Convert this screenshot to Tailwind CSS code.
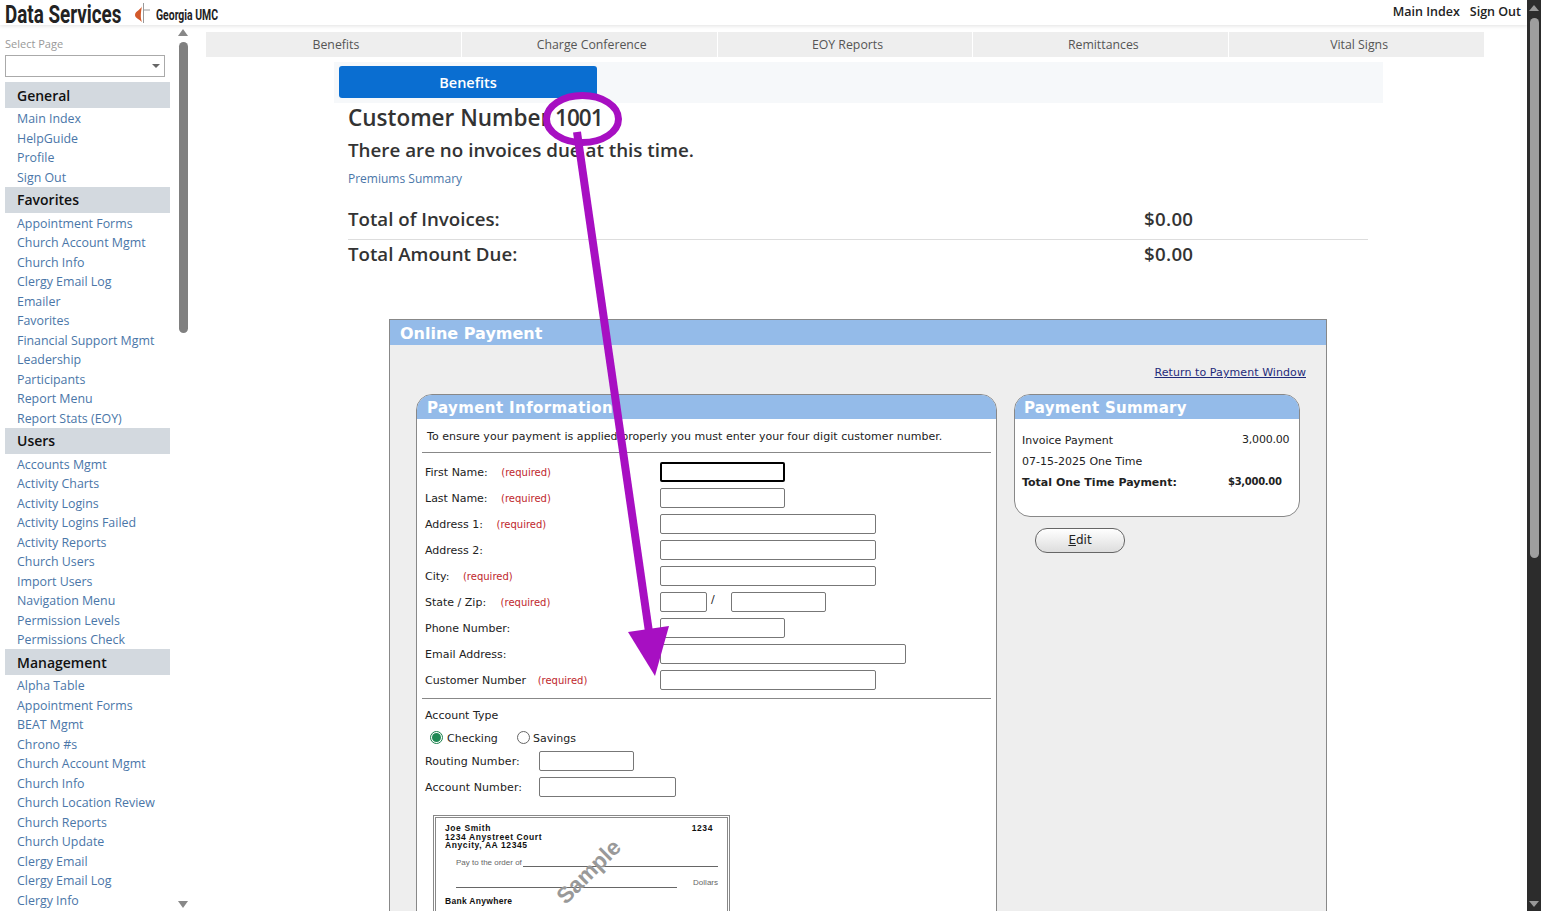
<!DOCTYPE html>
<html lang="en">
<head>
  <meta charset="UTF-8">
  <title>Data Services - Benefits</title>
  <script src="https://cdn.jsdelivr.net/npm/@tailwindcss/browser@4"></script>
</head>
<body class="bg-white font-['Open_Sans',sans-serif] overflow-hidden">
<div class="relative flex h-[911px] w-[1541px] overflow-hidden">

  <div class="w-[1527px] h-[911px] overflow-hidden">
    <!-- Top bar -->
    <header class="h-[25px] flex items-center shadow-[0_1px_4px_rgba(0,0,0,0.12)] relative">
      <div class="w-[180px] -mr-[50px] pl-[5px] h-[25px] pt-[1px]">
        <div class="origin-left scale-x-[.71] w-[172px] font-['Roboto',sans-serif] font-bold text-[26.5px] leading-[25px] text-[#222] whitespace-nowrap">Data Services</div>
      </div>
      <svg class="ml-[4px] w-[16px] h-[20px]" viewBox="0 0 16 20">
        <path d="M8 3 C8 6 1 8 1 12 C1 15 5 16 8 19 C6 15 7 8 8 3Z" fill="#d2592a"/>
        <path d="M9.5 0 V20 M9.5 7 H16" stroke="#999" stroke-width="1" fill="none"/>
      </svg>
      <div class="ml-[6px] pt-[5px] origin-left scale-x-[.745] font-['Roboto',sans-serif] font-bold text-[14px] leading-[20px] text-[#222] whitespace-nowrap">Georgia UMC</div>
      <nav class="ml-auto pr-[6px] flex gap-[10px] text-[12.5px] font-semibold text-[#222]">
        <a>Main Index</a><a>Sign Out</a>
      </nav>
    </header>

    <div class="flex">
      <!-- Sidebar -->
      <aside class="w-[173px] shrink-0 pl-[5px] h-[886px] overflow-hidden">
        <div class="pt-[12px] h-[30px] text-[11px] leading-[14px] text-[#999]">Select Page</div>
        <div class="w-[160px] h-[22px] border border-[#aaa] flex items-center justify-end pr-[4px]">
          <div class="w-0 h-0 border-x-[4px] border-x-transparent border-t-[4px] border-t-[#666]"></div>
        </div>
        <div class="mt-[5px] w-[165px] text-[12.4px] leading-[19.5px] text-[#4a76a8]">
          <h3 class="h-[26px] pl-[12px] bg-[#d3d9df] text-[14px] font-semibold leading-[28px] text-[#111]">General</h3>
          <ul class="pl-[12px] pt-[.5px]">
            <li class="pt-[.5px] -mb-[.5px]">Main Index</li><li class="pt-[.5px] -mb-[.5px]">HelpGuide</li><li class="pt-[.5px] -mb-[.5px]">Profile</li><li class="pt-[.5px] -mb-[.5px]">Sign Out</li>
          </ul>
          <h3 class="h-[26px] pl-[12px] bg-[#d3d9df] text-[14px] font-semibold leading-[26px] text-[#111]">Favorites</h3>
          <ul class="pl-[12px] pt-[1px] -mb-[.5px]">
            <li>Appointment Forms</li><li>Church Account Mgmt</li><li>Church Info</li><li>Clergy Email Log</li><li>Emailer</li><li>Favorites</li><li>Financial Support Mgmt</li><li>Leadership</li><li>Participants</li><li>Report Menu</li><li>Report Stats (EOY)</li>
          </ul>
          <h3 class="h-[26px] pl-[12px] bg-[#d3d9df] text-[14px] font-semibold leading-[26px] text-[#111]">Users</h3>
          <ul class="pl-[12px] pt-[1px] -mb-[.5px]">
            <li>Accounts Mgmt</li><li>Activity Charts</li><li>Activity Logins</li><li>Activity Logins Failed</li><li>Activity Reports</li><li>Church Users</li><li>Import Users</li><li>Navigation Menu</li><li>Permission Levels</li><li>Permissions Check</li>
          </ul>
          <h3 class="h-[26px] pl-[12px] bg-[#d3d9df] text-[14px] font-semibold leading-[28px] text-[#111]">Management</h3>
          <ul class="pl-[12px] pt-[1px]">
            <li>Alpha Table</li><li>Appointment Forms</li><li>BEAT Mgmt</li><li>Chrono #s</li><li>Church Account Mgmt</li><li>Church Info</li><li>Church Location Review</li><li>Church Reports</li><li>Church Update</li><li>Clergy Email</li><li>Clergy Email Log</li><li>Clergy Info</li>
          </ul>
        </div>
      </aside>

      <!-- Sidebar scrollbar -->
      <div class="w-[10px] ml-[5px] shrink-0 h-[886px] flex flex-col items-center">
        <div class="mt-[4px] w-0 h-0 border-x-[5px] border-x-transparent border-b-[7px] border-b-[#888]"></div>
        <div class="mt-[6px] w-[9px] h-[291px] rounded-full bg-[#808080]"></div>
        <div class="mt-auto mb-[3px] w-0 h-0 border-x-[5px] border-x-transparent border-t-[7px] border-t-[#888]"></div>
      </div>

      <!-- Main -->
      <main class="ml-[18px] w-[1278px] shrink-0">
        <div class="mt-[7px] grid grid-cols-5 gap-px h-[24px] text-[12.3px] leading-[25px] text-center text-[#555]">
          <div class="bg-[#eee] pl-[5px]">Benefits</div>
          <div class="bg-[#eee] pl-[5px]">Charge Conference</div>
          <div class="bg-[#eee] pl-[5px]">EOY Reports</div>
          <div class="bg-[#eee] pl-[5px]">Remittances</div>
          <div class="bg-[#eee] pl-[5px]">Vital Signs</div>
        </div>

        <div class="mt-[6px] ml-[128px] w-[1049px] h-[41px] bg-[#f6f8fa] pl-[5px] pt-[4px]">
          <div class="w-[258px] h-[32px] rounded-[3px] bg-[#0a6ed1] text-white text-[14.5px] font-semibold leading-[33px] text-center">Benefits</div>
        </div>

        <div class="ml-[142px] w-[1020px] text-[#333]">
          <h1 class="h-[30px] text-[22.5px] font-semibold leading-[30px]">Customer Number <span class="-ml-px tracking-[-1px]">1001</span></h1>
          <p class="mt-[2px] h-[30px] text-[18.8px] font-semibold leading-[30px]">There are no invoices due at this time.</p>
          <a class="block mt-[4px] h-[20px] text-[12px] leading-[20px] text-[#4a76a8]">Premiums Summary</a>
          <div class="mt-[15px] h-[36px] flex items-start border-b border-[#ddd] text-[18.7px] font-semibold leading-[30px]">
            <span class="w-[796px]">Total of Invoices:</span><span class="tracking-[.3px]">$0.00</span>
          </div>
          <div class="h-[28px] flex items-center text-[18.7px] font-semibold">
            <span class="w-[796px]">Total Amount Due:</span><span class="tracking-[.3px]">$0.00</span>
          </div>
        </div>

        <!-- Online payment panel -->
        <section class="mt-[51px] ml-[183px] w-[938px] h-[600px] border border-[#888] bg-[#eee] font-['DejaVu_Sans',sans-serif] text-[11px] text-[#222]">
          <h2 class="h-[25px] bg-[#94bbe9] pl-[10px] text-[16px] font-bold leading-[27px] text-white">Online Payment</h2>
          <div class="h-[49px] pt-[20px] pr-[20px] text-right tracking-[.08px]">
            <a class="underline leading-[16px] text-[#1f2a7a]">Return to Payment Window</a>
          </div>

          <div class="flex items-start pl-[26px]">
            <!-- Payment information -->
            <div class="w-[581px] h-[560px] shrink-0 rounded-t-[16px] border border-[#888] bg-white overflow-hidden">
              <h3 class="h-[24px] bg-[#94bbe9] pl-[10px] text-[15px] font-bold tracking-[.4px] leading-[26px] text-white">Payment Information</h3>
              <p class="ml-[5px] mr-[5px] h-[34px] pl-[5px] pt-[10px] border-b border-[#888] leading-[16px] tracking-[.03px]">To ensure your payment is applied properly you must enter your four digit customer number.</p>
              <div class="pt-[6px] pl-[8px]">
                <div class="flex items-center h-[26px]"><label class="w-[235px] pt-[2px]">First Name: <span class="ml-[10px] text-[10px] text-[#c0272d]">(required)</span></label><input class="w-[125px] h-[20px] bg-white rounded-[2px] border-2 border-black"></div>
                <div class="flex items-center h-[26px]"><label class="w-[235px] pt-[2px]">Last Name: <span class="ml-[10px] text-[10px] text-[#c0272d]">(required)</span></label><input class="w-[125px] h-[20px] bg-white rounded-[2px] border border-[#777]"></div>
                <div class="flex items-center h-[26px]"><label class="w-[235px] pt-[2px]">Address 1: <span class="ml-[10px] text-[10px] text-[#c0272d]">(required)</span></label><input class="w-[216px] h-[20px] bg-white rounded-[2px] border border-[#777]"></div>
                <div class="flex items-center h-[26px]"><label class="w-[235px] pt-[2px]">Address 2:</label><input class="w-[216px] h-[20px] bg-white rounded-[2px] border border-[#777]"></div>
                <div class="flex items-center h-[26px]"><label class="w-[235px] pt-[2px]">City: <span class="ml-[10px] text-[10px] text-[#c0272d]">(required)</span></label><input class="w-[216px] h-[20px] bg-white rounded-[2px] border border-[#777]"></div>
                <div class="flex items-center h-[26px]"><label class="w-[235px] pt-[2px]">State / Zip: <span class="ml-[11px] text-[10px] text-[#c0272d]">(required)</span></label><input class="w-[47px] h-[20px] bg-white rounded-[2px] border border-[#777]"><span class="w-[24px] pl-[4px] -mt-[3px]">/</span><input class="w-[95px] h-[20px] bg-white rounded-[2px] border border-[#777]"></div>
                <div class="flex items-center h-[26px]"><label class="w-[235px] pt-[2px]">Phone Number:</label><input class="w-[125px] h-[20px] bg-white rounded-[2px] border border-[#777]"></div>
                <div class="flex items-center h-[26px]"><label class="w-[235px] pt-[2px]">Email Address:</label><input class="w-[246px] h-[20px] bg-white rounded-[2px] border border-[#777]"></div>
                <div class="flex items-center h-[26px]"><label class="w-[235px] pt-[2px]">Customer Number <span class="ml-[8px] text-[10px] text-[#c0272d]">(required)</span></label><input class="w-[216px] h-[20px] bg-white rounded-[2px] border border-[#777]"></div>
              </div>
              <div class="mx-[5px] mt-[5px] border-t border-[#888]"></div>
              <div class="pl-[8px]">
                <div class="mt-[9px] h-[16px] leading-[16px]">Account Type</div>
                <div class="mt-[5px] h-[20px] flex items-center pl-[5px]">
                  <span class="-mt-[3px] w-[13px] h-[13px] rounded-full border border-[#1a7f4b] flex items-center justify-center"><span class="w-[9px] h-[9px] rounded-full bg-[#1f8a55]"></span></span>
                  <span class="ml-[4px] w-[70px]">Checking</span>
                  <span class="-mt-[3px] w-[13px] h-[13px] rounded-full border border-[#666]"></span>
                  <span class="ml-[3px]">Savings</span>
                </div>
                <div class="-mt-px flex items-center h-[26px]"><label class="w-[114px] pt-[2px] tracking-[.1px]">Routing Number:</label><input class="w-[95px] h-[20px] bg-white rounded-[2px] border border-[#777]"></div>
                <div class="flex items-center h-[26px]"><label class="w-[114px] pt-[2px] tracking-[.1px]">Account Number:</label><input class="w-[137px] h-[20px] bg-white rounded-[2px] border border-[#777]"></div>

                <!-- Sample check -->
                <div class="relative mt-[15px] ml-[8px] w-[297px] h-[130px] border-[3px] border-double border-[#888] px-[9px] py-[6px] font-['Liberation_Sans',sans-serif] text-[8px] leading-[8.5px] text-[#333]">
                  <div class="flex justify-between font-bold text-[8.5px] text-[#111] tracking-[.6px]">
                    <div>Joe Smith<br>1234 Anystreet Court<br>Anycity, AA 12345</div>
                    <div class="pr-[5px]">1234</div>
                  </div>
                  <div class="mt-[9px] flex items-end text-[#666] pl-[11px]">Pay to the order of<span class="flex-1 ml-px border-b border-[#666]"></span></div>
                  <div class="mt-[12px] flex items-end text-[#666] pl-[11px]"><span class="flex-1 border-b border-[#666]"></span><span class="ml-[16px]">Dollars</span></div>
                  <div class="mt-[9px] font-bold text-[8.5px] text-[#111] tracking-[.3px]">Bank Anywhere</div>
                  <div class="absolute left-[113px] top-[43px] -rotate-45 font-bold text-[22.5px] leading-[22px] text-[#999]">Sample</div>
                </div>
              </div>
            </div>

            <!-- Summary column -->
            <div class="ml-[17px] w-[286px]">
              <div class="h-[123px] rounded-[16px] border border-[#888] bg-white overflow-hidden">
                <h3 class="h-[24px] bg-[#94bbe9] pl-[9px] text-[15px] font-bold tracking-[.25px] leading-[26px] text-white">Payment Summary</h3>
                <div class="pl-[7px] pt-[11px] leading-[21px]">
                  <div class="flex"><span class="w-[220px]">Invoice Payment</span><span class="-mt-[1px] tracking-[-.2px]">3,000.00</span></div>
                  <div>07-15-2025 One Time</div>
                  <div class="flex font-bold"><span class="w-[206px]">Total One Time Payment:</span><span class="-mt-[1px] text-[10px] tracking-[-.3px]">$3,000.00</span></div>
                </div>
              </div>
              <button class="block mt-[11px] ml-[21px] w-[90px] h-[25px] pb-[2px] rounded-[12px] border border-[#666] bg-linear-to-b from-white to-[#ddd] text-[12px] text-[#222]"><u>E</u>dit</button>
            </div>
          </div>
        </section>
      </main>
    </div>
  </div>

  <!-- Page scrollbar -->
  <div class="w-[14px] h-[911px] shrink-0 bg-[#2c2c2c] flex flex-col items-center">
    <div class="mt-[5px] w-0 h-0 border-x-[5px] border-x-transparent border-b-[6px] border-b-[#999]"></div>
    <div class="mt-[7px] w-[9px] h-[540px] rounded-full bg-[#9e9e9e]"></div>
    <div class="mt-auto mb-[4px] w-0 h-0 border-x-[5px] border-x-transparent border-t-[6px] border-t-[#999]"></div>
  </div>

  <!-- Annotation drawn on top of the screenshot -->
  <svg class="absolute left-0 top-0 pointer-events-none" width="1541" height="911" viewBox="0 0 1541 911">
    <ellipse cx="582.5" cy="119" rx="36" ry="23.5" fill="none" stroke="#a70fc2" stroke-width="7"/>
    <path d="M577 132 L649 632" fill="none" stroke="#a70fc2" stroke-width="8"/>
    <path d="M628 632 L669 626 L655 676Z" fill="#a70fc2"/>
  </svg>
</div>
</body>
</html>
